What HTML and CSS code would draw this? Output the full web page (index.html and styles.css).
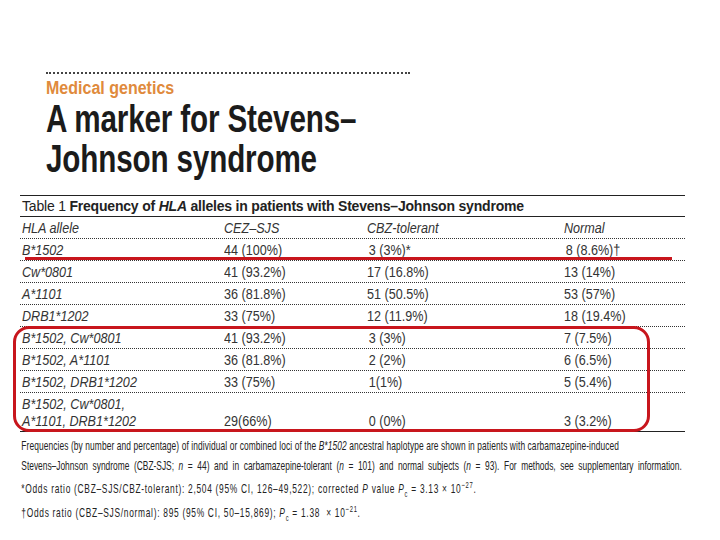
FILE: index.html
```html
<!DOCTYPE html>
<html lang="en">
<head>
<meta charset="utf-8">
<title>A marker for Stevens–Johnson syndrome</title>
<link rel="stylesheet" href="styles.css">
</head>
<body>
<div class="page">
  <header class="head">
    <div class="rule"></div>
    <div class="kicker">Medical genetics</div>
    <h1 class="title">A marker for Stevens–<br>Johnson syndrome</h1>
  </header>

  <section class="figure">
    <div class="caption">Table 1 <b>Frequency of <i>HLA</i> alleles in patients with Stevens–Johnson syndrome</b></div>
    <div class="tbl">
      <div class="row hdr"><span>HLA allele</span><span>CEZ–SJS</span><span>CBZ-tolerant</span><span>Normal</span></div>
      <div class="row"><span>B*1502</span><span>44 (100%)</span><span class="v3">3 (3%)*</span><span class="v4">8 (8.6%)†</span></div>
      <div class="row"><span>Cw*0801</span><span>41 (93.2%)</span><span>17 (16.8%)</span><span>13 (14%)</span></div>
      <div class="row"><span>A*1101</span><span>36 (81.8%)</span><span>51 (50.5%)</span><span>53 (57%)</span></div>
      <div class="row"><span>DRB1*1202</span><span>33 (75%)</span><span>12 (11.9%)</span><span>18 (19.4%)</span></div>
      <div class="row"><span>B*1502, Cw*0801</span><span>41 (93.2%)</span><span class="v3">3 (3%)</span><span>7 (7.5%)</span></div>
      <div class="row"><span>B*1502, A*1101</span><span>36 (81.8%)</span><span class="v3">2 (2%)</span><span>6 (6.5%)</span></div>
      <div class="row"><span>B*1502, DRB1*1202</span><span>33 (75%)</span><span class="v3">1(1%)</span><span>5 (5.4%)</span></div>
      <div class="row last"><span>B*1502, Cw*0801,<br>A*1101, DRB1*1202</span><span>29(66%)</span><span class="v3">0 (0%)</span><span>3 (3.2%)</span></div>
    </div>
    <div class="notes">
      <div class="n1 first">Frequencies (by number and percentage) of individual or combined loci of the <i>B*1502</i> ancestral haplotype are shown in patients with carbamazepine-induced</div>
      <div class="n1 wide">Stevens–Johnson syndrome (CBZ-SJS; <i>n</i> = 44) and in carbamazepine-tolerant (<i>n</i> = 101) and normal subjects (<i>n</i> = 93). For methods, see supplementary information.</div>
      <div class="n2">*Odds ratio (CBZ–SJS/CBZ-tolerant): 2,504 (95% CI, 126–49,522); corrected <i>P</i> value <i>P</i><sub>c</sub> = 3.13 × 10<sup>−27</sup>.</div>
      <div class="n3">†Odds ratio (CBZ–SJS/normal): 895 (95% CI, 50–15,869); <i>P</i><sub>c</sub> = 1.38 &nbsp;× 10<sup>−21</sup>.</div>
    </div>
    <div class="mark-line"></div>
    <div class="mark-box"></div>
  </section>
</div>
</body>
</html>
```

FILE: styles.css
```css
html, body {
  margin: 0;
  padding: 0;
  background: #fff;
}
.page {
  width: 720px;
  height: 540px;
  overflow: hidden;
  font-family: "Liberation Sans", Arial, sans-serif;
  color: #1a1a1a;
}
.head {
  padding: 72px 0 0 46px;
}
.rule {
  width: 364px;
  height: 0;
  border-top: 2px dotted #444;
}
.kicker {
  padding-top: 3px;
  font-weight: bold;
  font-size: 18px;
  line-height: 22px;
  color: #e08a3c;
  transform: scaleX(0.89);
  transform-origin: 0 0;
}
.title {
  margin: 0;
  font-size: 39px;
  line-height: 40px;
  font-weight: bold;
  color: #1b1b1b;
  letter-spacing: -0.2px;
  transform: scaleX(0.76);
  transform-origin: 0 0;
  white-space: nowrap;
}
.figure {
  position: relative;
  margin: 16px 0 0 20px;
  width: 665px;
}
.caption {
  border-top: 1px solid #222;
  border-bottom: 1px solid #222;
  font-size: 14px;
  line-height: 20px;
  padding-left: 2px;
  letter-spacing: -0.2px;
  color: #222;
}
.tbl {
  font-size: 15px;
  color: #333;
}
.row {
  display: grid;
  grid-template-columns: 202px 143px 197px 1fr;
  border-bottom: 1px dotted #333;
  line-height: 17px;
  padding: 2px 0 2px 2px;
}
.row span {
  display: inline-block;
  white-space: nowrap;
  transform: scaleX(0.84);
  transform-origin: 0 0;
}
.row span:first-child,
.hdr span {
  font-style: italic;
}
.v3, .v4 {
  padding-left: 2px;
}
.row.last {
  border-bottom: 1px solid #222;
  align-items: end;
}
.notes {
  width: 1100px;
  font-size: 13px;
  color: #222;
  padding: 4px 0 0 2px;
  white-space: nowrap;
  transform: scaleX(0.645);
  transform-origin: 0 0;
}
.n1 {
  line-height: 20px;
}
.first {
  letter-spacing: 0.15px;
}
.wide {
  word-spacing: 3.5px;
}
.n2 {
  margin-top: 3px;
  line-height: 20px;
  letter-spacing: 1.1px;
}
.n3 {
  margin-top: 4px;
  line-height: 20px;
  letter-spacing: 1.1px;
}
sub, sup {
  font-size: 9px;
  line-height: 0;
}
.mark-line {
  position: absolute;
  left: 5px;
  top: 62px;
  width: 647px;
  height: 3px;
  background: #c8161d;
}
.mark-box {
  position: absolute;
  left: -7px;
  top: 131px;
  width: 631px;
  height: 100px;
  border: 3px solid #c8161d;
  border-radius: 16px;
}
```
